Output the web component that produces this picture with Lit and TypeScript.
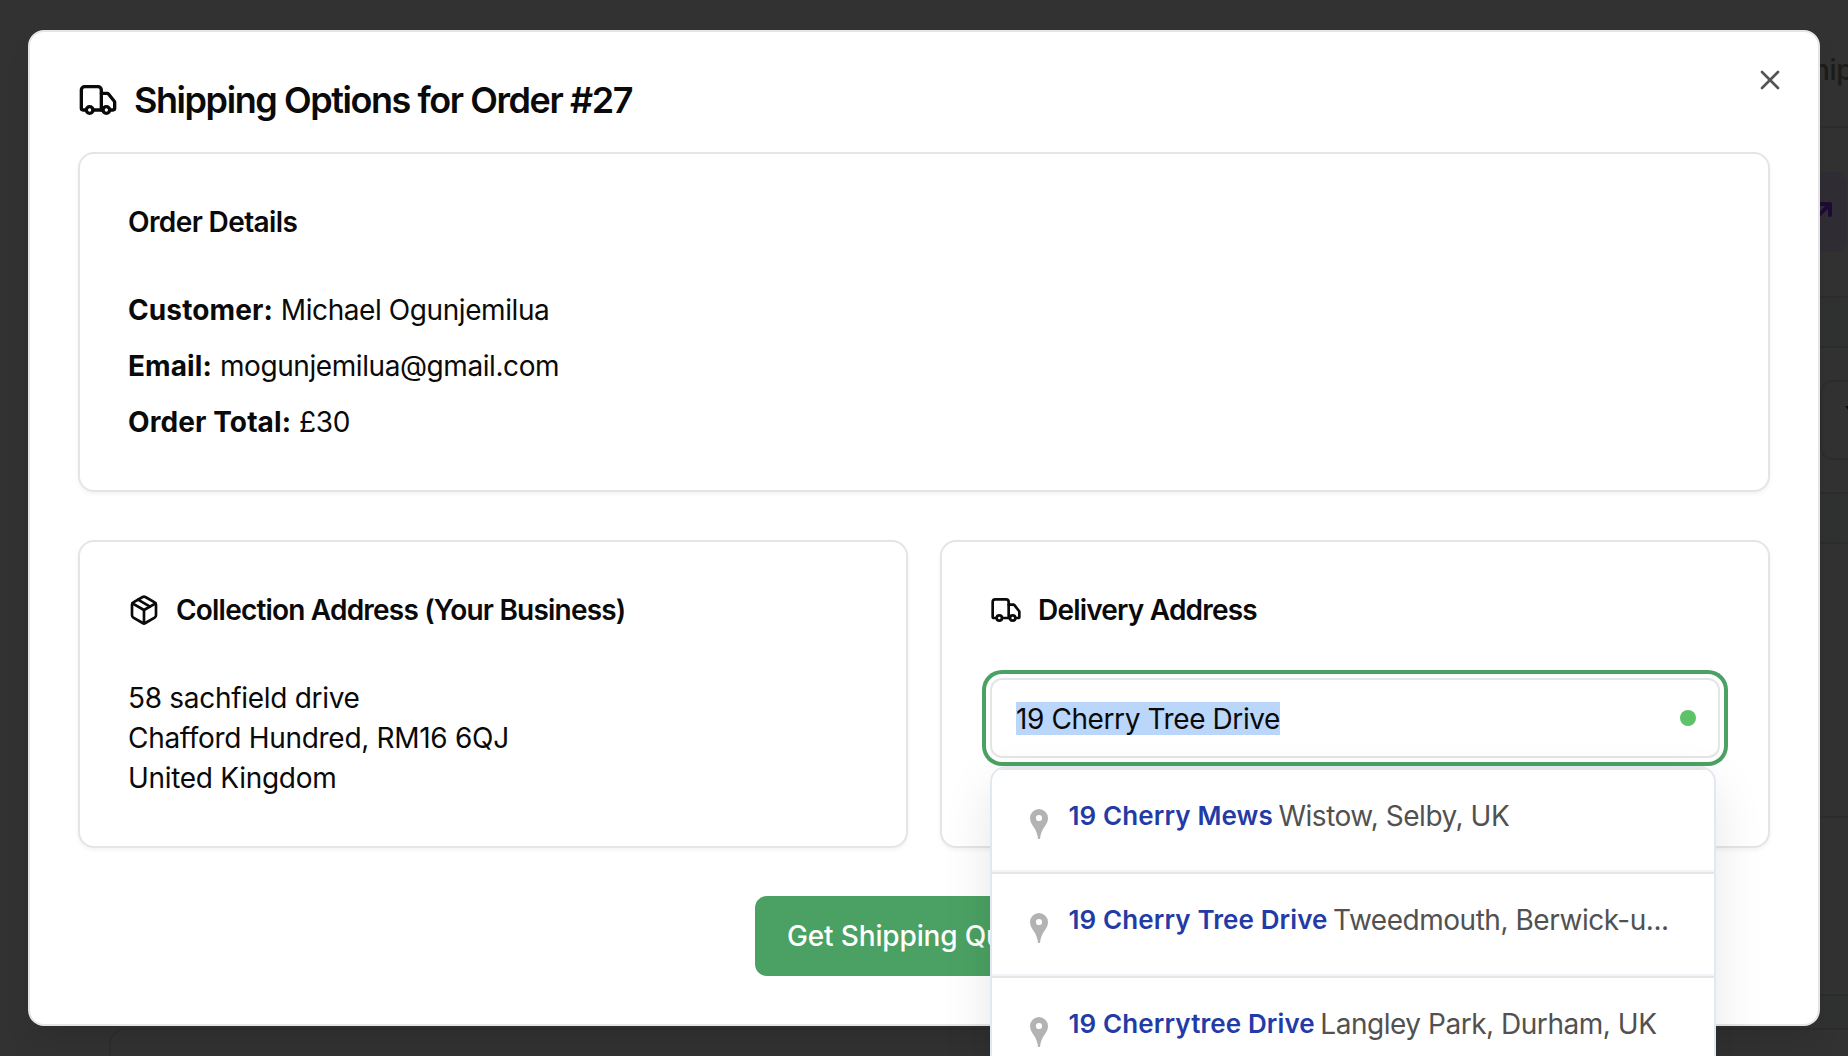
import { LitElement, html, css, svg } from "lit";
import { customElement, property } from "lit/decorators.js";

const ICONS: Record<string, unknown> = {
  truck: svg`
    <path d="M14 18V6a2 2 0 0 0-2-2H4a2 2 0 0 0-2 2v11a1 1 0 0 0 1 1h2"/>
    <path d="M15 18H9"/>
    <path d="M19 18h2a1 1 0 0 0 1-1v-3.65a1 1 0 0 0-.22-.624l-3.48-4.35A1 1 0 0 0 17.52 8H14"/>
    <circle cx="17" cy="18" r="2"/>
    <circle cx="7" cy="18" r="2"/>`,
  package: svg`
    <path d="M11 21.73a2 2 0 0 0 2 0l7-4A2 2 0 0 0 21 16V8a2 2 0 0 0-1-1.73l-7-4a2 2 0 0 0-2 0l-7 4A2 2 0 0 0 3 8v8a2 2 0 0 0 1 1.73z"/>
    <path d="M12 22V12"/>
    <path d="M3.29 7 12 12l8.71-5"/>
    <path d="m7.5 4.27 9 5.15"/>`,
  close: svg`<path d="M18 6 6 18"/><path d="m6 6 12 12"/>`,
};

@customElement("line-icon")
class LineIcon extends LitElement {
  @property() name = "truck";
  static styles = css`
    :host { display: block; flex: none; width: 32px; height: 32px; }
    svg {
      display: block; width: 100%; height: 100%; fill: none; stroke: currentColor;
      stroke-width: 2; stroke-linecap: round; stroke-linejoin: round;
    }
  `;
  render() {
    return html`<svg viewBox="0 0 24 24">${ICONS[this.name]}</svg>`;
  }
}

interface Suggestion { main: string; rest: string; }

const SUGGESTIONS: Suggestion[] = [
  { main: "19 Cherry Mews", rest: "Wistow, Selby, UK" },
  { main: "19 Cherry Tree Drive", rest: "Tweedmouth, Berwick-u..." },
  { main: "19 Cherrytree Drive", rest: "Langley Park, Durham, UK" },
];

@customElement("address-field")
class AddressField extends LitElement {
  static styles = css`
    :host { display: block; position: relative; }
    * { box-sizing: border-box; }
    .input {
      display: flex; align-items: center; justify-content: space-between;
      height: 80px; padding: 0 22px 0 24px; border: 2px solid #e5e5e5; border-radius: 12px;
      background: #fff; box-shadow: 0 0 0 4px #fff, 0 0 0 8px #4ba163;
      letter-spacing: -0.405px;
    }
    .selected { background: #bbd6fb; line-height: 35px; height: 33px; }
    .dot { width: 16px; height: 16px; border-radius: 50%; background: #5ec269; }
    .menu {
      position: absolute; top: 88px; left: 0; width: 726px; z-index: 2;
      border: 2px solid #e2e8f0; border-radius: 16px; background: #fff; overflow: hidden;
      box-shadow: 0 20px 50px rgba(0, 0, 0, 0.1);
    }
    .item {
      display: flex; align-items: flex-start; height: 104px; padding: 24px 32px 0 38px;
      border-top: 2px solid #e5e5e5; border-bottom: 2px solid #f1f5f9;
      white-space: nowrap; color: #515151; line-height: 44px;
    }
    .pin { flex: none; width: 18px; height: 30px; margin: 15px 20.5px 0 0; }
    .main { color: #233ba6; font-size: 26px; font-weight: 600; letter-spacing: 0.11px; margin-right: 5.5px; }
    .rest { letter-spacing: -0.47px; }
  `;
  render() {
    return html`
      <div class="input"><span class="selected">19 Cherry Tree Drive</span><span class="dot"></span></div>
      <div class="menu">
        ${SUGGESTIONS.map((s) => html`
          <div class="item">
            <svg class="pin" viewBox="0 0 18 30">
              <path fill="#b3b3b3" fill-rule="evenodd" d="M9 0a9 9 0 0 0-9 9c0 3 1 5 3 8 3 4 4.500 8 5 13h2c.5-5 2-9 5-13 2-3 3-5 3-8a9 9 0 0 0-9-9zm0 5.900a3.100 3.100 0 1 1 0 6.200 3.100 3.100 0 0 1 0-6.200z"/>
            </svg>
            <span class="main">${s.main}</span><span class="rest">${s.rest}</span>
          </div>`)}
      </div>`;
  }
}

@customElement("app-root")
class AppRoot extends LitElement {
  static styles = css`
    :host { display: block; }
    * { box-sizing: border-box; }
    .page {
      position: relative; width: 1848px; height: 1056px; overflow: hidden; background: #323232;
      font-family: Inter, "Liberation Sans", sans-serif; font-size: 28px; line-height: 40px; color: #0a0a0a;
    }
    .behind { display: flex; flex-direction: column; height: 100%; }
    .row { border-bottom: 2px solid #2d2d2d; margin-left: 1820px; overflow: hidden; white-space: nowrap; flex: none; }
    .row.band { background: #303232; }
    .head { height: 128px; padding-top: 50px; color: #1c1c1a; }
    .head span { margin-left: -7px; font-weight: 500; letter-spacing: -0.3px; }
    .r1 { height: 170px; padding-top: 44px; }
    .chip { width: 27px; height: 80px; border-radius: 0 12px 12px 0; background: #302d34; padding: 28px 0 0; }
    .arrow { display: block; width: 16px; height: 18px; fill: none; stroke: #1e0a36; stroke-width: 4; stroke-linejoin: round; stroke-linecap: round; }
    .r2 { height: 50px; }
    .r3 { height: 146px; padding-top: 32px; }
    .select { display: flex; width: 60px; height: 80px; border: 2px solid #2d2d2d; border-radius: 12px; padding: 24px 0 0 23px; }
    .caret { width: 14px; height: 9px; background: #0b0b0b; clip-path: polygon(0 0, 100% 0, 50% 100%); }
    .r4 { height: 50px; }
    .r5 { height: 274px; }
    .r6 { height: 178px; }
    .r7 { height: 34px; border-bottom: 0; }
    .panel { flex: none; height: 60px; margin: -2px -20px 0 109px; border: 2px solid #2d2d2d; border-radius: 16px; background: #323232; }
    .overlay { position: absolute; inset: 0; padding: 30px 28px; display: flex; }
    .modal {
      flex: 1; position: relative; padding: 48px; background: #fff; border: 2px solid #e5e5e5; border-radius: 16px;
      display: flex; flex-direction: column; box-shadow: 0 20px 30px -6px rgba(0, 0, 0, 0.1);
    }
    .close { position: absolute; top: 32px; right: 32px; color: #555; }
    .title { display: flex; align-items: center; gap: 16px; margin: 0 0 32px; font-size: 36px; font-weight: 600; letter-spacing: -1.43px; line-height: 40px; }
    .title line-icon { width: 40px; height: 40px; }
    .card { border: 2px solid #e5e5e5; border-radius: 16px; padding: 48px; box-shadow: 0 2px 4px rgba(0, 0, 0, 0.05); background: #fff; }
    .card h3 { display: flex; align-items: center; gap: 16px; margin: 0 0 48px; font-size: 28px; font-weight: 600; letter-spacing: -0.8px; line-height: 40px; }
    .card h3.plain { letter-spacing: -0.6px; }
    .details { display: flex; flex-direction: column; gap: 16px; letter-spacing: -0.42px; }
    .details b { font-weight: 700; letter-spacing: 0.1px; margin-right: 0.5px; }
    .columns { display: grid; grid-template-columns: 1fr 1fr; gap: 32px; margin: 48px 0; }
    .address { letter-spacing: -0.3px; }
    .button {
      align-self: center; width: 338px; height: 80px; padding: 0 32px; border-radius: 12px; background: #4ba163;
      color: #fff; font-weight: 500; line-height: 80px; white-space: nowrap; letter-spacing: -0.15px;
    }
  `;
  render() {
    return html`
      <div class="page">
        <div class="behind">
          <div class="row head"><span>hip</span></div>
          <div class="row r1"><div class="chip"><svg class="arrow" viewBox="0 0 16 18"><path d="M-6 4H10V15M10 4-4 18"/></svg></div></div>
          <div class="row band r2"></div>
          <div class="row r3"><div class="select"><div class="caret"></div></div></div>
          <div class="row band r4"></div>
          <div class="row r5"></div>
          <div class="row r6"></div>
          <div class="row band r7"></div>
          <div class="panel"></div>
        </div>
        <div class="overlay">
          <section class="modal">
            <line-icon class="close" name="close"></line-icon>
            <h2 class="title"><line-icon name="truck"></line-icon>Shipping Options for Order #27</h2>
            <div class="card">
              <h3 class="plain">Order Details</h3>
              <div class="details">
                <div><b>Customer:</b> Michael Ogunjemilua</div>
                <div><b>Email:</b> mogunjemilua@gmail.com</div>
                <div><b>Order Total:</b> £30</div>
              </div>
            </div>
            <div class="columns">
              <div class="card">
                <h3><line-icon name="package"></line-icon>Collection Address (Your Business)</h3>
                <div class="address">
                  <div>58 sachfield drive</div>
                  <div>Chafford Hundred, RM16 6QJ</div>
                  <div>United Kingdom</div>
                </div>
              </div>
              <div class="card">
                <h3><line-icon name="truck"></line-icon>Delivery Address</h3>
                <address-field></address-field>
              </div>
            </div>
            <div class="button">Get Shipping Quotes</div>
          </section>
        </div>
      </div>`;
  }
}
